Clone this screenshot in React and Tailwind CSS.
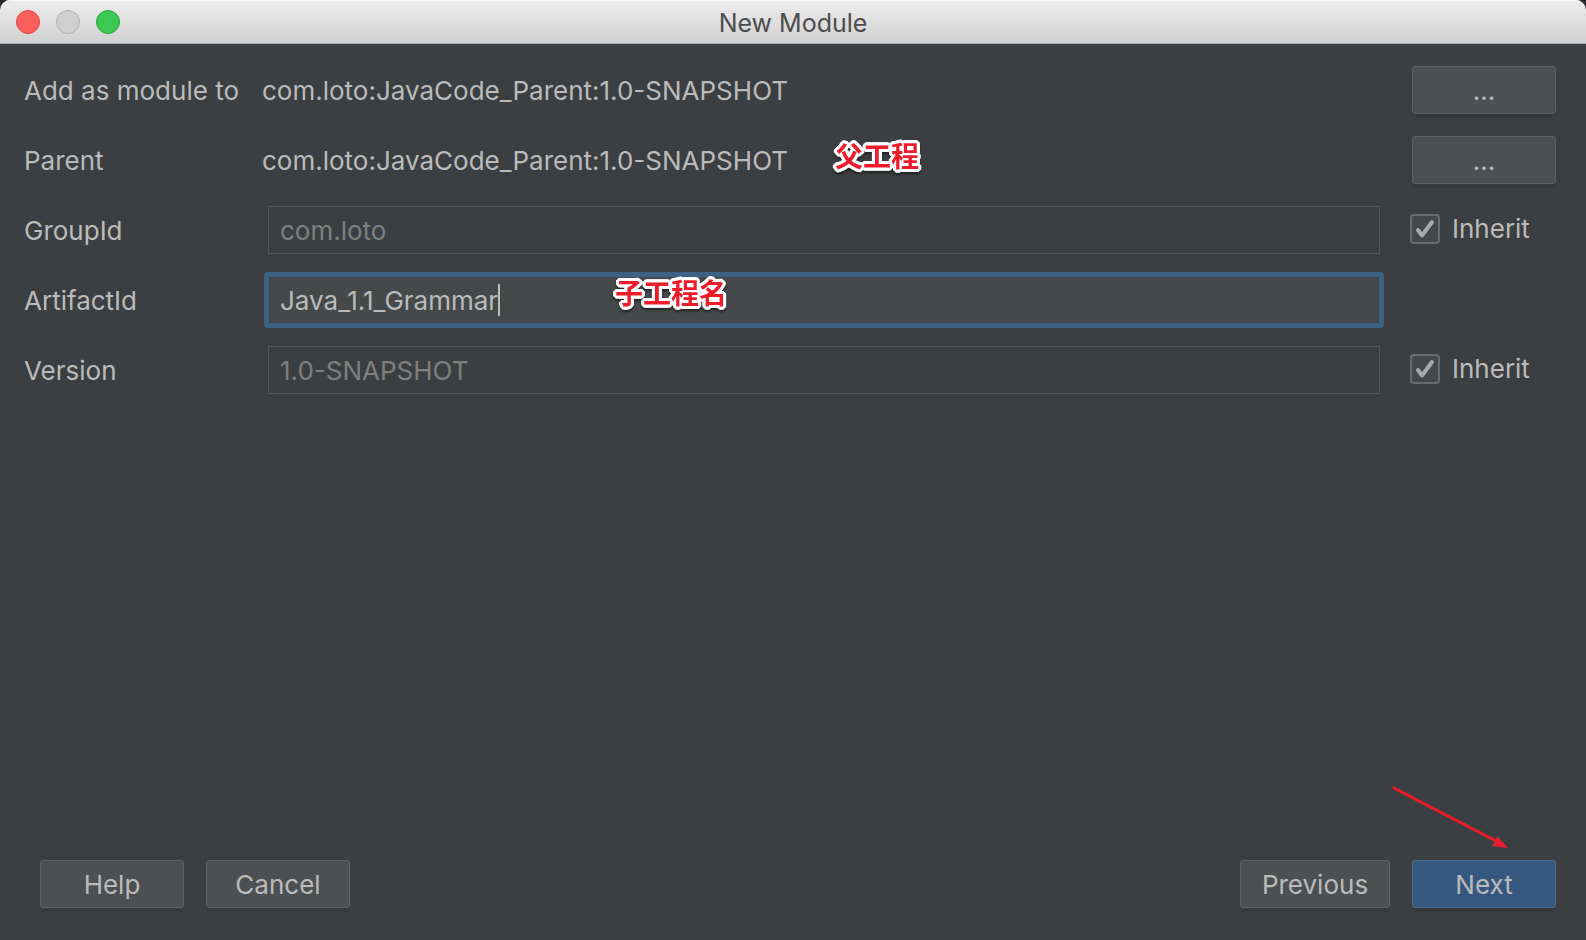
import { useState } from "react";

const buttonBase =
  "h-12 rounded-[3px] border pt-0.5 text-[26px] leading-8 text-[#bbbbbb] shadow-[0_4px_0_#37393b]";
const plainButton = "border-[#5e6162] bg-[#4c5052]";
const primaryButton = "border-[#4a708c] bg-[#365880]";
const textCell = "pt-0.5";
const disabledInput =
  "block h-12 w-full border border-[#555555] bg-transparent px-[11px] text-[#7f7f7f]";

function Button({ primary = false, className = "w-36", children, ...rest }) {
  return (
    <button
      type="button"
      className={`${buttonBase} ${primary ? primaryButton : plainButton} ${className}`}
      {...rest}
    >
      {children}
    </button>
  );
}

function Row({ children }) {
  return (
    <div className="grid h-12 grid-cols-[238px_minmax(0,1fr)_146px] items-center">
      {children}
    </div>
  );
}

function Note({ className, children }) {
  return (
    <span
      className={`pointer-events-none absolute whitespace-nowrap font-['Noto_Sans_CJK_SC',sans-serif] text-[28px] leading-8 font-bold text-[#ee1c2b] [text-shadow:3px_0_white,-3px_0_white,0_3px_white,0_-3px_white,2px_2px_white,-2px_2px_white,2px_-2px_white,-2px_-2px_white,3px_1px_white,3px_-1px_white,-3px_1px_white,-3px_-1px_white,1px_3px_white,-1px_3px_white,1px_-3px_white,-1px_-3px_white,1px_1px_white,-1px_-1px_white] drop-shadow-[0_2px_1px_rgba(0,0,0,0.5)] ${className}`}
    >
      {children}
    </span>
  );
}

function Inherit({ id, label }) {
  const [checked, setChecked] = useState(true);
  return (
    <div className="flex items-center gap-3 pb-0.5">
      <span className="grid size-[30px] shrink-0">
        <input
          id={id}
          type="checkbox"
          aria-label={label}
          checked={checked}
          onChange={(e) => setChecked(e.target.checked)}
          className="col-start-1 row-start-1 size-[30px] appearance-none rounded-[4px] border-2 border-[#6b6b6b] bg-[#43494a]"
        />
        {checked && (
          <svg
            viewBox="0 0 30 30"
            className="pointer-events-none col-start-1 row-start-1 size-[30px]"
            fill="none"
            stroke="#a9a9a9"
            strokeWidth="4"
            strokeLinecap="round"
            strokeLinejoin="round"
          >
            <path d="M8 16l4 5.500L22 8" />
          </svg>
        )}
      </span>
      <label htmlFor={id}>Inherit</label>
    </div>
  );
}

export default function App() {
  const [artifact, setArtifact] = useState("Java_1.1_Grammar");
  return (
    <div className="min-h-screen bg-[#28282c]">
      <main className="flex min-h-screen flex-col overflow-hidden rounded-t-[10px] bg-[#3c3f41] font-['Inter',sans-serif] text-[26px] leading-8 text-[#bbbbbb]">
        <header className="grid h-11 grid-cols-[1fr_auto_1fr] items-center border-b border-[#a9a9a9] bg-linear-to-b from-[#ededed] to-[#d1d1d1] px-4 shadow-[inset_0_1px_0_#f8f8f8]">
          <div className="flex gap-4">
            <button type="button" aria-label="Close" className="size-6 rounded-full border border-[#df4744] bg-[#fc605c]" />
            <button type="button" aria-label="Minimize" className="size-6 rounded-full border border-[#b0b0b0] bg-[#d0d0d0]" />
            <button type="button" aria-label="Zoom" className="size-6 rounded-full border border-[#2ba33a] bg-[#3cc953]" />
          </div>
          <h1 className="pt-0.5 text-[25px] text-[#4d4d4d]">New Module</h1>
        </header>

        <form className="flex flex-1 flex-col gap-[22px] pt-[22px] pr-[30px] pl-6">
          <Row>
            <span className={textCell}>Add as module to</span>
            <span className={textCell}>com.loto:JavaCode_Parent:1.0-SNAPSHOT</span>
            <Button className="ml-0.5 w-36" aria-label="Choose module">...</Button>
          </Row>
          <Row>
            <span className={textCell}>Parent</span>
            <span className={`relative ${textCell}`}>
              com.loto:JavaCode_Parent:1.0-SNAPSHOT
              <Note className="top-[-4px] left-[573px]">父工程</Note>
            </span>
            <Button className="ml-0.5 w-36" aria-label="Choose parent">...</Button>
          </Row>
          <Row>
            <label htmlFor="group" className={textCell}>GroupId</label>
            <div className="pr-[30px] pl-1.5">
              <input id="group" disabled value="com.loto" className={disabledInput} />
            </div>
            <Inherit id="inherit-group" label="Inherit GroupId" />
          </Row>
          <Row>
            <label htmlFor="artifact" className={textCell}>ArtifactId</label>
            <div className="relative pr-[30px] pl-1.5">
              <input
                id="artifact"
                value={artifact}
                onChange={(e) => setArtifact(e.target.value)}
                className="block h-12 w-full rounded-[1px] border border-[#3d6185] bg-[#45494a] px-[11px] ring-4 ring-[#3d6185] outline-none"
              />
              <span className="absolute top-2 left-[236px] h-8 w-0.5 bg-[#bbbbbb]" />
              <Note className="top-0 left-[353px]">子工程名</Note>
            </div>
          </Row>
          <Row>
            <label htmlFor="version" className={textCell}>Version</label>
            <div className="pr-[30px] pl-1.5">
              <input id="version" disabled value="1.0-SNAPSHOT" className={disabledInput} />
            </div>
            <Inherit id="inherit-version" label="Inherit Version" />
          </Row>
        </form>

        <footer className="flex justify-between pr-[30px] pb-8 pl-10">
          <div className="flex gap-[22px]">
            <Button>Help</Button>
            <Button>Cancel</Button>
          </div>
          <div className="relative flex gap-[22px]">
            <Button className="w-[150px]">Previous</Button>
            <Button primary>Next</Button>
            <svg
              viewBox="0 0 120 66"
              className="pointer-events-none absolute right-12 bottom-[58px] h-[66px] w-[120px]"
              aria-hidden="true"
            >
              <path d="M6 4L108 57" stroke="#ee1c2b" strokeWidth="3" strokeLinecap="round" />
              <path d="M120 64L104 62L108 57L109 52Z" fill="#ee1c2b" />
            </svg>
          </div>
        </footer>
      </main>
    </div>
  );
}
